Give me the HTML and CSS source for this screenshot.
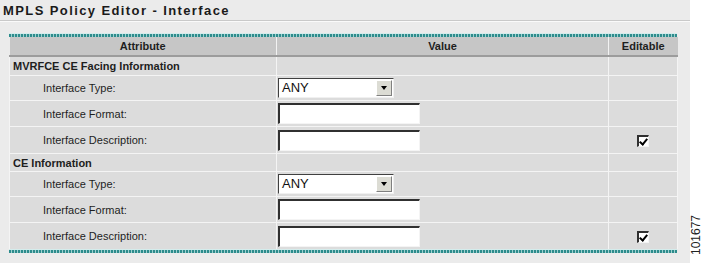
FILE: index.html
```html
<!DOCTYPE html>
<html lang="en">

<head>
    <meta charset="UTF-8">
    <title>MPLS Policy Editor - Interface</title>
    <link rel="stylesheet" href="styles.css">
</head>

<body>
    <div class="page">
        <div class="panel">
            <h1 class="title">MPLS Policy Editor - Interface</h1>

            <div class="table-wrap">
                <div class="teal-bar"></div>
                <table class="policy-table">
                    <colgroup>
                        <col class="col-attr">
                        <col class="col-value">
                        <col class="col-edit">
                    </colgroup>
                    <thead>
                        <tr>
                            <th>Attribute</th>
                            <th>Value</th>
                            <th>Editable</th>
                        </tr>
                    </thead>
                    <tbody>
                        <!-- MVRFCE section -->
                        <tr class="section first">
                            <td>MVRFCE CE Facing Information</td>
                            <td></td>
                            <td></td>
                        </tr>
                        <tr class="r-type">
                            <td class="label">Interface Type:</td>
                            <td>
                                <div class="fake-select">
                                    <span class="sel-text">ANY</span>
                                    <span class="sel-btn"><span class="arrow"></span></span>
                                </div>
                            </td>
                            <td></td>
                        </tr>
                        <tr class="r-fmt">
                            <td class="label">Interface Format:</td>
                            <td><input class="text-in" type="text"></td>
                            <td></td>
                        </tr>
                        <tr class="r-desc">
                            <td class="label">Interface Description:</td>
                            <td><input class="text-in" type="text"></td>
                            <td class="check-cell"><span class="check"></span></td>
                        </tr>

                        <!-- CE section -->
                        <tr class="section">
                            <td>CE Information</td>
                            <td></td>
                            <td></td>
                        </tr>
                        <tr class="r-type">
                            <td class="label">Interface Type:</td>
                            <td>
                                <div class="fake-select">
                                    <span class="sel-text">ANY</span>
                                    <span class="sel-btn"><span class="arrow"></span></span>
                                </div>
                            </td>
                            <td></td>
                        </tr>
                        <tr class="r-fmt">
                            <td class="label">Interface Format:</td>
                            <td><input class="text-in" type="text"></td>
                            <td></td>
                        </tr>
                        <tr class="r-desc">
                            <td class="label">Interface Description:</td>
                            <td><input class="text-in" type="text"></td>
                            <td class="check-cell"><span class="check"></span></td>
                        </tr>
                    </tbody>
                </table>
                <div class="teal-bar"></div>
            </div>
        </div>

        <div class="side">
            <span class="fig-num">101677</span>
        </div>
    </div>
</body>

</html>
```

FILE: styles.css
```css
html,
body {
    margin: 0;
    padding: 0;
    background: #ffffff;
}

.page {
    display: flex;
    width: 702px;
    height: 263px;
}

.panel {
    width: 690px;
    height: 263px;
    background: #ebebeb;
    box-sizing: border-box;
}

.title {
    margin: 0;
    height: 21px;
    padding: 3px 0 0 3px;
    box-sizing: border-box;
    font-family: "Liberation Sans", Arial, sans-serif;
    font-size: 13px;
    font-weight: bold;
    letter-spacing: 1.4px;
    color: #1a1a1a;
    border-bottom: 1px solid #c9c9c9;
    box-shadow: 0 1px 0 #fafafa;
}

.table-wrap {
    margin: 12px 0 0 9px;
    width: 668px;
}

/* Teal dotted bars top and bottom */
.teal-bar {
    height: 3px;
    background: repeating-linear-gradient(90deg, #2d8c8c 0 2px, #9fcfcf 2px 3px);
    border-top: 1px solid #d4ecec;
}

.policy-table {
    width: 668px;
    border-collapse: collapse;
    table-layout: fixed;
    font-family: "Liberation Sans", Arial, sans-serif;
    font-size: 11px;
    color: #1e1e1e;
}

.col-attr {
    width: 267px;
}

.col-value {
    width: 332px;
}

.col-edit {
    width: 69px;
}

.policy-table th {
    height: 18px;
    background: #c6c6c6;
    border-left: 1px solid #f2f2f2;
    border-bottom: 2px solid #9c9c9c;
    font-weight: bold;
    font-size: 11px;
    text-align: center;
    padding: 0;
}

.policy-table th:first-child {
    border-left: none;
}

.policy-table td {
    background: #dcdcdc;
    border-left: 1px solid #f4f4f4;
    border-top: 1px solid #f4f4f4;
    padding: 0;
    height: 24px;
    vertical-align: middle;
}

.policy-table td:last-child {
    border-right: 1px solid #f4f4f4;
}

.policy-table tbody tr:first-child td {
    border-top: none;
}

.policy-table tr.section td {
    height: 17px;
    font-weight: bold;
    padding-left: 3px;
}

.policy-table tr.section.first td {
    height: 18px;
}

.policy-table tr.r-type td {
    height: 24px;
}

.policy-table tr.r-fmt td {
    height: 25px;
}

.policy-table tr.r-desc td {
    height: 26px;
}

.policy-table td.label {
    padding-left: 33px;
}

.fake-select {
    display: flex;
    width: 116px;
    height: 20px;
    box-sizing: border-box;
    background: #ffffff;
    border-top: 1px solid #404040;
    border-left: 1px solid #404040;
    border-right: 1px solid #f0f0f0;
    border-bottom: 1px solid #f0f0f0;
    margin-left: 1px;
}

.sel-text {
    flex: 1;
    font-size: 13px;
    line-height: 18px;
    padding-left: 3px;
    color: #111;
}

.sel-btn {
    width: 16px;
    margin: 1px;
    background: #dcdcd4;
    border-left: 1px solid #ffffff;
    border-top: 1px solid #ffffff;
    border-right: 1px solid #808080;
    border-bottom: 1px solid #808080;
    display: flex;
    align-items: center;
    justify-content: center;
    box-sizing: border-box;
}

.arrow {
    width: 0;
    height: 0;
    border-left: 3px solid transparent;
    border-right: 3px solid transparent;
    border-top: 4px solid #000;
}

.text-in {
    display: block;
    width: 142px;
    height: 21px;
    margin: 0 0 0 1px;
    padding: 0;
    box-sizing: border-box;
    background: #ffffff;
    border-top: 2px solid #303030;
    border-left: 2px solid #303030;
    border-right: 1px solid #f4f4f4;
    border-bottom: 1px solid #f4f4f4;
}

.check-cell {
    text-align: center;
}

.check {
    display: inline-block;
    position: relative;
    width: 12px;
    height: 12px;
    box-sizing: border-box;
    background: #ffffff;
    border-top: 2px solid #303030;
    border-left: 2px solid #303030;
    border-right: 1px solid #f4f4f4;
    border-bottom: 1px solid #f4f4f4;
    vertical-align: middle;
}

/* checkmark drawn over the box */
.check::after {
    content: "";
    position: absolute;
    left: 2px;
    top: 0px;
    width: 3px;
    height: 6px;
    border-right: 2px solid #000;
    border-bottom: 2px solid #000;
    transform: rotate(40deg);
}

.side {
    flex: 1;
    position: relative;
}

.fig-num {
    position: absolute;
    left: -1px;
    top: 215px;
    writing-mode: vertical-rl;
    transform: rotate(180deg);
    font-family: "Liberation Sans", Arial, sans-serif;
    font-size: 12px;
    color: #222;
}
```
